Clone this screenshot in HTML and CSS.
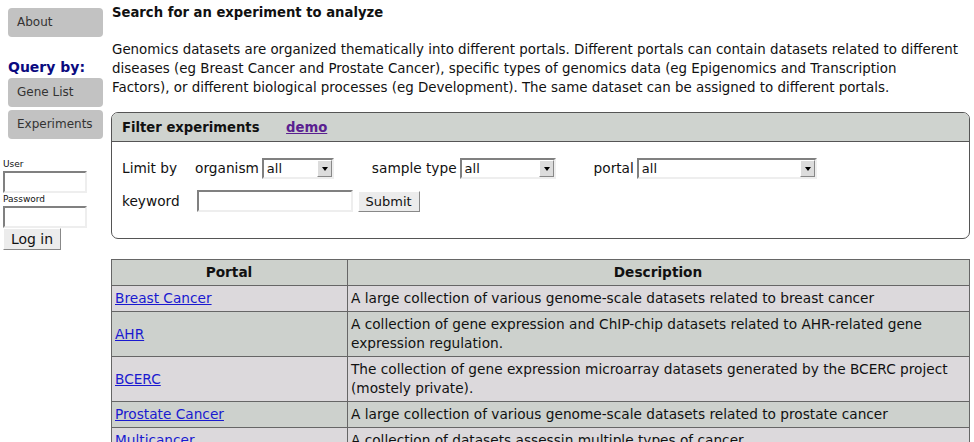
FILE: index.html
```html
<!DOCTYPE html>
<html lang="en">
<head>
  <meta charset="UTF-8" />
  <title>Search for an experiment</title>
  <link rel="stylesheet" href="styles.css">
</head>
<body>
  <div class="page">
    <div class="sidebar">
      <a href="#" class="navbtn">About</a>
      <div class="query-title">Query by:</div>
      <a href="#" class="navbtn">Gene List</a>
      <a href="#" class="navbtn">Experiments</a>

      <form class="login">
        <label for="user">User</label>
        <input type="text" id="user" class="field" />
        <label for="pass">Password</label>
        <input type="password" id="pass" class="field" />
        <button type="button" class="btn login-btn">Log in</button>
      </form>
    </div>

    <div class="main">
      <h1>Search for an experiment to analyze</h1>
      <p class="intro">Genomics datasets are organized thematically into different portals. Different portals can contain datasets related to different diseases (eg Breast Cancer and Prostate Cancer), specific types of genomics data (eg Epigenomics and Transcription<br>Factors), or different biological processes (eg Development). The same dataset can be assigned to different portals.</p>

      <div class="filter">
        <div class="filter-head">
          <span class="filter-title">Filter experiments</span>
          <a href="#" class="demo">demo</a>
        </div>
        <div class="filter-body">
          <div class="filter-row">
            <span class="limit">Limit by</span>
            <span class="group">
              <span>organism</span>
              <span class="select" style="width: 72px;"><span class="select-val">all</span><span class="arrow"></span></span>
            </span>
            <span class="group">
              <span>sample type</span>
              <span class="select" style="width: 96px;"><span class="select-val">all</span><span class="arrow"></span></span>
            </span>
            <span class="group">
              <span>portal</span>
              <span class="select" style="width: 180px;"><span class="select-val">all</span><span class="arrow"></span></span>
            </span>
          </div>
          <div class="filter-row">
            <span class="keyword">keyword</span>
            <input type="text" class="field kw-field" />
            <button type="button" class="btn submit-btn">Submit</button>
          </div>
        </div>
      </div>

      <table class="portals">
        <tr>
          <th class="col-portal">Portal</th>
          <th>Description</th>
        </tr>
        <tr class="odd">
          <td><a href="#">Breast Cancer</a></td>
          <td>A large collection of various genome-scale datasets related to breast cancer</td>
        </tr>
        <tr class="even">
          <td><a href="#">AHR</a></td>
          <td>A collection of gene expression and ChIP-chip datasets related to AHR-related gene expression regulation.</td>
        </tr>
        <tr class="odd">
          <td><a href="#">BCERC</a></td>
          <td>The collection of gene expression microarray datasets generated by the BCERC project (mostely private).</td>
        </tr>
        <tr class="even">
          <td><a href="#">Prostate Cancer</a></td>
          <td>A large collection of various genome-scale datasets related to prostate cancer</td>
        </tr>
        <tr class="odd">
          <td><a href="#">Multicancer</a></td>
          <td>A collection of datasets assessin multiple types of cancer</td>
        </tr>
      </table>
    </div>
  </div>
</body>
</html>
```

FILE: styles.css
```css
* {
  box-sizing: border-box;
}
body {
  margin: 0;
  font-family: "DejaVu Sans", Verdana, sans-serif;
  font-size: 14px;
  line-height: 19px;
  color: #111;
  background: #fff;
  overflow: hidden;
}
.page {
  display: flex;
  align-items: flex-start;
}
.sidebar {
  width: 103px;
  flex-shrink: 0;
  padding-top: 8px;
  display: flex;
  flex-direction: column;
}
.navbtn {
  display: block;
  margin-left: 8px;
  height: 29px;
  line-height: 29px;
  padding-left: 9px;
  background: #c2c2c2;
  color: #333;
  font-size: 12px;
  text-decoration: none;
  border-radius: 4px;
  margin-bottom: 3px;
}
.query-title {
  margin: 18px 0 2px 8px;
  color: #0a0a80;
  font-weight: bold;
  font-size: 14px;
  line-height: 18px;
}
.login {
  display: flex;
  flex-direction: column;
  align-items: flex-start;
  margin: 16px 0 0 3px;
}
.login label {
  font-size: 9px;
  line-height: 13px;
  color: #111;
}
.field {
  border: 2px solid;
  border-color: #808080 #eee #eee #808080;
  background: #fff;
  height: 22px;
  padding: 0 2px;
  font-family: inherit;
  flex-shrink: 0;
}
.login .field {
  width: 84px;
}
.btn {
  font-family: inherit;
  color: #111;
  background: #ececec;
  border: 1px solid;
  border-color: #fff #888 #888 #fff;
  padding: 0;
  cursor: pointer;
  flex-shrink: 0;
}
.login-btn {
  width: 58px;
  height: 22px;
  font-size: 14px;
}
.main {
  flex: 1;
  padding: 0 4px 0 8px;
  min-width: 0;
  font-size: 13.7px;
}
h1 {
  font-size: 13.2px;
  line-height: 19px;
  margin: 3px 0 0 1px;
}
.intro {
  font-size: 13.4px;
  margin: 18px 0 0 1px;
}
.filter {
  margin-top: 15px;
  border: 1px solid #555;
  border-radius: 7px;
  height: 127px;
}
.filter-head {
  background: #cfd3cf;
  border-bottom: 1px solid #555;
  border-radius: 6px 6px 0 0;
  height: 29px;
  padding: 5px 0 0 10px;
  font-size: 13.2px;
  font-weight: bold;
}
.filter-title {
  margin-right: 22px;
}
.demo {
  color: #5a2090;
}
.filter-body {
  padding: 15px 10px 0 10px;
}
.filter-row {
  display: flex;
  align-items: center;
  height: 22px;
  margin-bottom: 11px;
}
.limit {
  margin-right: 18px;
}
.group {
  display: flex;
  align-items: center;
  gap: 3px;
  margin-right: 38px;
  flex-shrink: 0;
}
.select {
  position: relative;
  display: inline-block;
  flex-shrink: 0;
  height: 21px;
  border: 2px solid;
  border-color: #808080 #eee #eee #808080;
  background: #fff;
  font-size: 13px;
  line-height: 17px;
}
.select-val {
  padding-left: 3px;
}
.arrow {
  position: absolute;
  top: 0;
  right: 0;
  width: 15px;
  height: 17px;
  background: #dcdcdc;
  border: 1px solid;
  border-color: #fff #888 #888 #fff;
}
.arrow::after {
  content: "";
  position: absolute;
  left: 4px;
  top: 6px;
  border-left: 3px solid transparent;
  border-right: 3px solid transparent;
  border-top: 4px solid #000;
}
.keyword {
  margin-right: 17px;
}
.kw-field {
  width: 156px;
}
.submit-btn {
  margin-left: 5px;
  width: 62px;
  height: 21px;
  font-size: 13px;
}
.portals {
  width: 100%;
  margin-top: 20px;
  border-collapse: collapse;
  border: 1px solid #666;
}
.portals th,
.portals td {
  border: 1px solid #666;
  padding: 3px 4px 3px 3px;
  text-align: left;
  vertical-align: middle;
}
.portals th {
  background: #cdd1cc;
  text-align: center;
  font-weight: bold;
}
.col-portal {
  width: 236px;
}
.odd td {
  background: #dcd9dc;
}
.even td {
  background: #cdd1cd;
}
.portals a {
  color: #1a1ad0;
}
```
